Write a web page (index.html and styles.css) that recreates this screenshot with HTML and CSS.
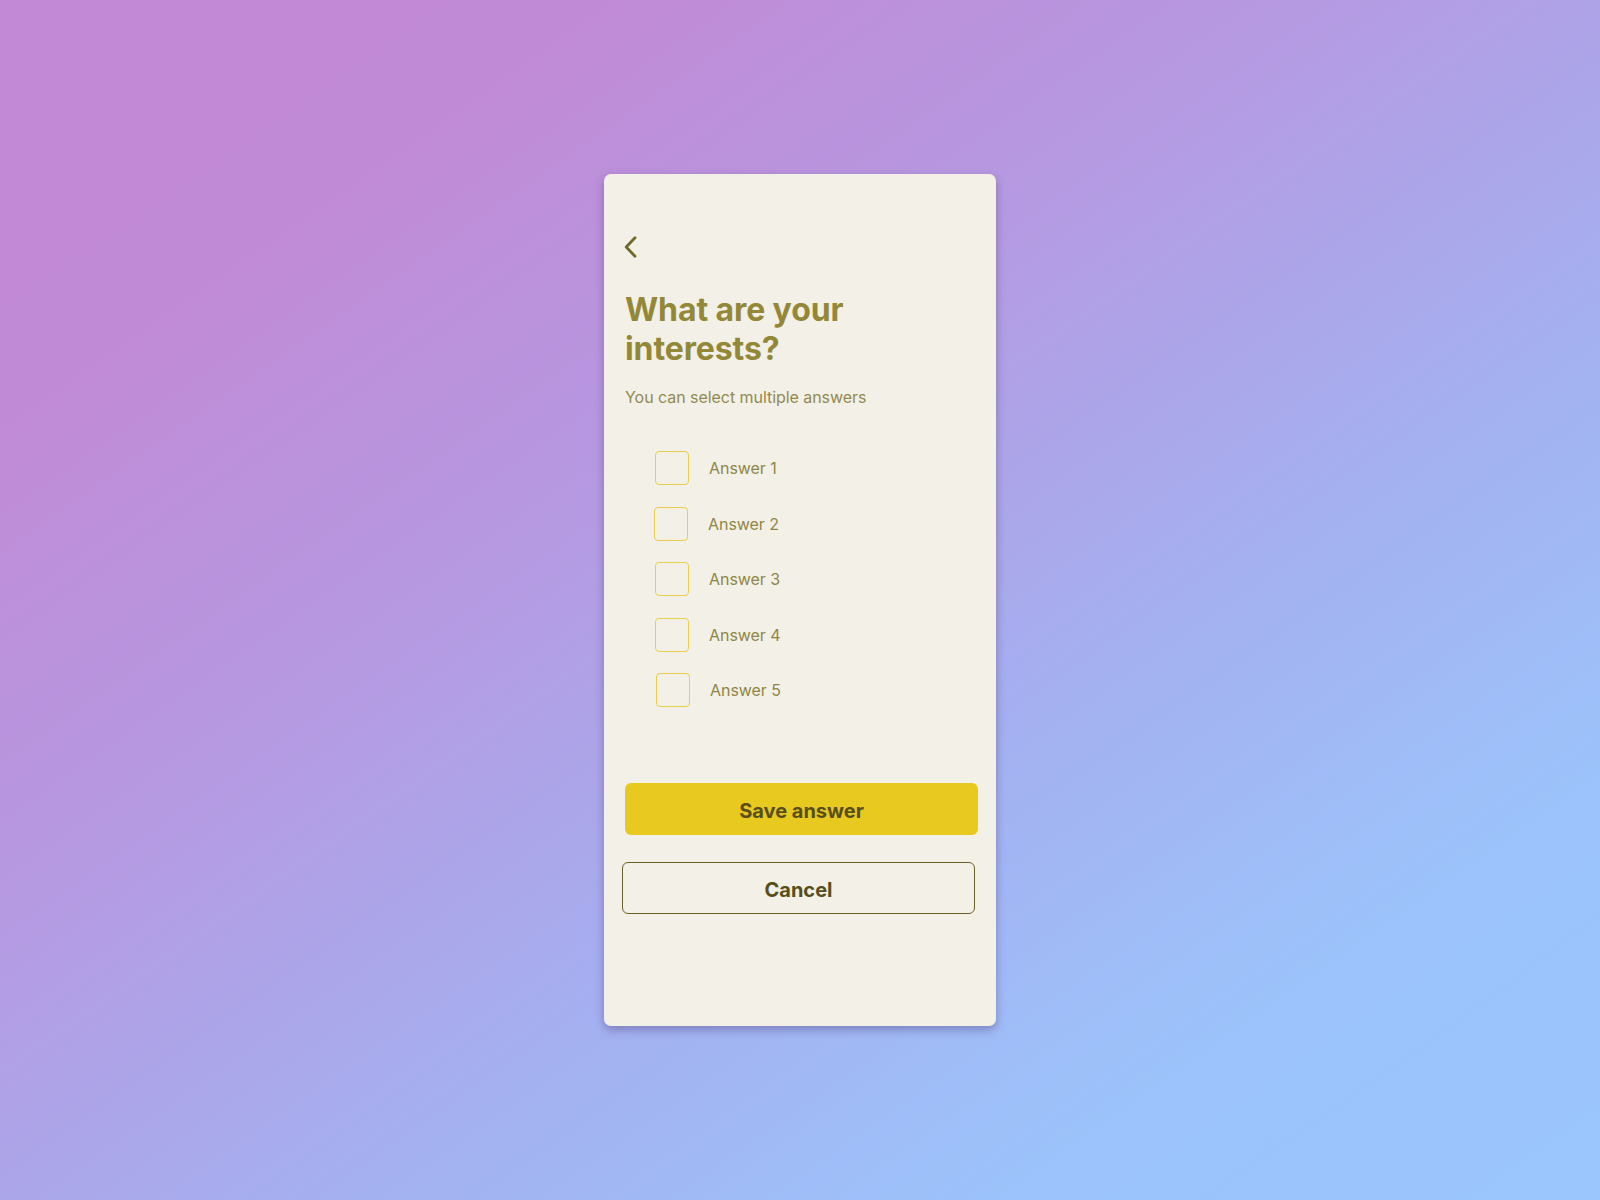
FILE: index.html
```html
<!DOCTYPE html>
<html lang="en">
<head>
<meta charset="utf-8">
<title>What are your interests?</title>
<link rel="stylesheet" href="styles.css">
</head>
<body>
<main class="stage">
  <section class="card">
    <button class="back" aria-label="Back">
      <svg width="14" height="22" viewBox="0 0 14 22" fill="none">
        <path d="M11 1.8 L2.2 11 L11 20.2" stroke="#6f6a2c" stroke-width="2.8" stroke-linecap="round" stroke-linejoin="round"/>
      </svg>
    </button>
    <h1 class="title">What are your<br>interests?</h1>
    <p class="subtitle">You can select multiple answers</p>
    <ul class="options">
      <li class="option"><span class="box"></span><span class="label">Answer 1</span></li>
      <li class="option shift-l"><span class="box"></span><span class="label">Answer 2</span></li>
      <li class="option shift-m"><span class="box"></span><span class="label">Answer 3</span></li>
      <li class="option shift-m"><span class="box"></span><span class="label">Answer 4</span></li>
      <li class="option shift-r"><span class="box"></span><span class="label">Answer 5</span></li>
    </ul>
    <button class="btn btn-primary">Save answer</button>
    <button class="btn btn-outline">Cancel</button>
  </section>
</main>
</body>
</html>
```

FILE: styles.css
```css
* { box-sizing: border-box; }
html, body { margin: 0; padding: 0; }
body {
  width: 1600px;
  height: 1200px;
  font-family: Inter, "Noto Sans", sans-serif;
  background: linear-gradient(145deg, #c189d6 0%, #c18ad6 18%, #b59ae2 40%, #a4b0f0 62%, #9cc3fb 82%, #9bc5fd 100%);
  overflow: hidden;
}
.stage {
  width: 1600px;
  height: 1200px;
  display: flex;
  align-items: center;
  justify-content: center;
}
.card {
  width: 392px;
  height: 852px;
  background: #f3f0e7;
  border-radius: 7px;
  box-shadow: 0 4px 10px rgba(70, 55, 110, 0.4);
  padding: 62px 18px 0 21px;
  display: flex;
  flex-direction: column;
  align-items: flex-start;
}
.back {
  border: 0;
  background: none;
  padding: 0;
  margin-left: -1px;
  width: 14px;
  height: 22px;
  display: block;
  cursor: pointer;
}
.back svg { display: block; }
.title {
  margin: 33px 0 0 0;
  font-size: 32px;
  line-height: 38.5px;
  font-weight: 700;
  color: #938838;
  letter-spacing: -0.1px;
}
.subtitle {
  margin: 17px 0 0 0;
  font-size: 16px;
  line-height: 24px;
  color: #918a50;
  letter-spacing: -0.05px;
}
.options {
  list-style: none;
  margin: 42px 0 0 0;
  padding: 0 0 0 30px;
  display: flex;
  flex-direction: column;
  gap: 21.5px;
}
.option {
  display: flex;
  align-items: center;
  gap: 20px;
  height: 34px;
}
.shift-l { margin-left: -1px; }
.shift-m { margin-left: 0; }
.shift-r { margin-left: 1px; }
.box {
  width: 34px;
  height: 34px;
  border: 1.5px solid #e9cf4a;
  border-radius: 4px;
  display: block;
}
.label {
  font-size: 16px;
  color: #8f8646;
  letter-spacing: -0.05px;
}
.btn {
  width: 353px;
  height: 52px;
  border-radius: 6px;
  font-family: Inter, "Noto Sans", sans-serif;
  font-size: 20px;
  font-weight: 700;
  color: #574e1c;
  display: flex;
  align-items: center;
  justify-content: center;
  padding: 3px 0 0 0;
  cursor: pointer;
}
.btn-primary {
  margin-top: 76px;
  background: #e8c920;
  border: 0;
}
.btn-outline {
  margin-top: 27px;
  margin-left: -3px;
  background: transparent;
  border: 1.5px solid #6b6128;
}
```
